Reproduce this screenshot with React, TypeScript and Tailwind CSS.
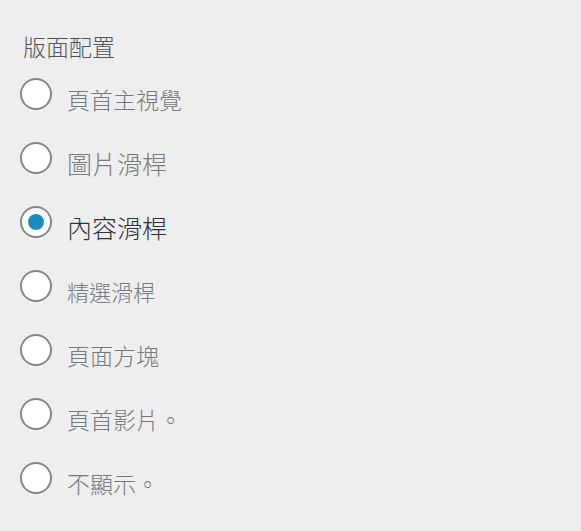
import React from "react";

const items: { label: string; checked?: boolean; size: string }[] = [
  { label: "頁首主視覺", size: "text-[23px]" },
  { label: "圖片滑桿", size: "text-[25px]" },
  { label: "內容滑桿", checked: true, size: "text-[25px]" },
  { label: "精選滑桿", size: "text-[22px]" },
  { label: "頁面方塊", size: "text-[23px]" },
  { label: "頁首影片。", size: "text-[23px]" },
  { label: "不顯示。", size: "text-[23px]" },
];

export default function App() {
  return (
    <div
      className="w-[581px] h-[531px] bg-[#eeeeee] pl-[20px] pt-[31px] font-light"
      style={{ fontFamily: '"Noto Sans CJK TC", "Noto Sans", sans-serif' }}
    >
      <div className="pl-[3px] text-[23px] leading-[30px] text-[#50575e]">版面配置</div>
      <div className="mt-[17px] flex flex-col gap-[32px]">
        {items.map((it) => (
          <div key={it.label} className="flex items-start h-[32px]">
            <div className="w-[32px] h-[32px] rounded-full border-2 border-[#7e8993] bg-white flex items-center justify-center shrink-0">
              {it.checked && <div className="w-[16px] h-[16px] rounded-full bg-[#1e8cbe]" />}
            </div>
            <div
              className={`ml-[15px] ${it.size} leading-[32px] mt-[5px] whitespace-nowrap ${
                it.checked ? "text-[#2c3338]" : "text-[#777b80]"
              }`}
            >
              {it.label}
            </div>
          </div>
        ))}
      </div>
    </div>
  );
}
